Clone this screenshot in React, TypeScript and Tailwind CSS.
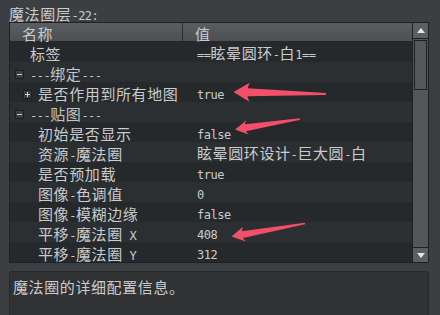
import React from 'react';

type Row = {
  name: string;
  value?: string;
  pad: string;
  icon?: '+' | '-';
  group?: boolean;
};

const rows: Row[] = [
  { name: '标签', value: '==眩晕圆环-白1==', pad: 'pl-[20px]' },
  { name: '---绑定---', pad: 'pl-[5px]', icon: '-', group: true },
  { name: '是否作用到所有地图', value: 'true', pad: 'pl-[13px]', icon: '+' },
  { name: '---贴图---', pad: 'pl-[5px]', icon: '-', group: true },
  { name: '初始是否显示', value: 'false', pad: 'pl-[28px]' },
  { name: '资源-魔法圈', value: '眩晕圆环设计-巨大圆-白', pad: 'pl-[28px]' },
  { name: '是否预加载', value: 'true', pad: 'pl-[28px]' },
  { name: '图像-色调值', value: '0', pad: 'pl-[28px]' },
  { name: '图像-模糊边缘', value: 'false', pad: 'pl-[28px]' },
  { name: '平移-魔法圈 X', value: '408', pad: 'pl-[28px]' },
  { name: '平移-魔法圈 Y', value: '312', pad: 'pl-[28px]' },
];

// CJK runs get the big font, latin runs the small mono one
function Mixed({ text }: { text: string }) {
  const parts = text.split(/([\u3000-\u9fff\uff00-\uffef]+)/).filter(Boolean);
  return (
    <span className="whitespace-pre leading-[14px]">
      {parts.map((p, i) =>
        /[\u3000-\u9fff\uff00-\uffef]/.test(p) ? (
          <span key={i} className="font-['Noto_Sans_CJK_SC',sans-serif] text-[15px] tracking-[0.6px]">
            {p}
          </span>
        ) : (
          <span key={i} className="font-['DejaVu_Sans_Mono',monospace] text-[12px] tracking-[-0.5px]">
            {p}
          </span>
        ),
      )}
    </span>
  );
}

function Box({ sign }: { sign: '+' | '-' }) {
  return (
    <span className="relative w-[9px] h-[9px] shrink-0 border border-[#1b1d1f] bg-[#3b3e40] rounded-[1px]">
      <span className="absolute left-[1px] top-[3px] w-[5px] h-[1px] bg-[#d0d0d0]" />
      {sign === '+' && <span className="absolute left-[3px] top-[1px] w-[1px] h-[5px] bg-[#d0d0d0]" />}
    </span>
  );
}

function arrow(tip: [number, number], tail: [number, number], hl: number, hw: number, s0: number, s1: number) {
  const dx = tail[0] - tip[0];
  const dy = tail[1] - tip[1];
  const len = Math.hypot(dx, dy);
  const ux = dx / len;
  const uy = dy / len;
  const px = -uy;
  const py = ux;
  const at = (d: number, w: number) => `${tip[0] + ux * d + px * w},${tip[1] + uy * d + py * w}`;
  return [
    at(0, 0),
    at(hl, -hw),
    at(hl - 2, -s0),
    at(len, -s1),
    at(len, s1),
    at(hl - 2, s0),
    at(hl, hw),
  ].join(' ');
}

export default function App() {
  return (
    <div className="relative w-[440px] h-[315px] overflow-hidden bg-[#3c3f41] text-[#c9cbcd]">
      <div className="h-[22px] pl-[9px] pt-[7px] flex items-start">
        <Mixed text="魔法圈层-22:" />
      </div>

      <div className="mx-[9px] w-[420px] h-[241px] border border-[#1e2022] flex">
        <div className="flex-1 flex flex-col">
          <div className="h-[19px] flex bg-gradient-to-b from-[#5a5e61] to-[#4c5053] border-b border-[#25282a]">
            <div className="w-[173px] pl-[12px] pt-[4px] flex items-start border-r border-[#2a2d2f]">
              <Mixed text="名称" />
            </div>
            <div className="flex-1 pl-[12px] pt-[4px] flex items-start">
              <Mixed text="值" />
            </div>
          </div>
          {rows.map((r, i) => (
            <div
              key={i}
              className={`h-[20px] flex ${i % 2 === 0 ? 'bg-[#26292b]' : 'bg-[#2c2f31]'}`}
            >
              <div className={`w-[174px] flex items-center gap-[6px] pt-[5px] pb-[1px] ${r.pad}`}>
                {r.icon && <Box sign={r.icon} />}
                <span className={r.group ? 'text-[#c2c4c6]' : ''}>
                  <Mixed text={r.name} />
                </span>
              </div>
              <div className="flex-1 flex items-center pl-[13px] pt-[5px] pb-[1px]">
                {r.value && <Mixed text={r.value} />}
              </div>
            </div>
          ))}
        </div>

        <div className="w-[16px] flex flex-col bg-[#53575a] border-l border-[#1e2022]">
          <div className="h-[16px] flex items-center justify-center bg-[#5b5f62] border-b border-[#1e2022]">
            <svg width="8" height="5" viewBox="0 0 8 5">
              <path d="M0 5 L4 0 L8 5 Z" fill="#e6e6e6" />
            </svg>
          </div>
          <div className="flex-1 pt-[1px] px-[1px]">
            <div className="h-[50px] border border-[#1e2022] bg-[#54585b]" />
          </div>
          <div className="h-[15px] flex items-center justify-center bg-[#5b5f62] border-t border-[#1e2022]">
            <svg width="8" height="5" viewBox="0 0 8 5">
              <path d="M0 0 L4 5 L8 0 Z" fill="#e6e6e6" />
            </svg>
          </div>
        </div>
      </div>

      <div className="mt-[8px] mx-[9px] w-[420px] h-[60px] rounded-[3px] border border-[#26282a] bg-[#303234] pl-[3px] pt-[8px] flex items-start">
        <Mixed text="魔法圈的详细配置信息。" />
      </div>

      <svg className="absolute left-0 top-0 pointer-events-none" width="440" height="315">
        <polygon points={arrow([233.5, 92], [326, 94], 16, 9.5, 4, 1)} fill="#f24f6a" />
        <polygon points={arrow([235, 129.5], [300, 119], 12.5, 7.2, 3.5, 0.8)} fill="#f24f6a" />
        <polygon points={arrow([231.5, 236.5], [305, 223.5], 13, 7.5, 3.5, 0.8)} fill="#f24f6a" />
      </svg>
    </div>
  );
}
